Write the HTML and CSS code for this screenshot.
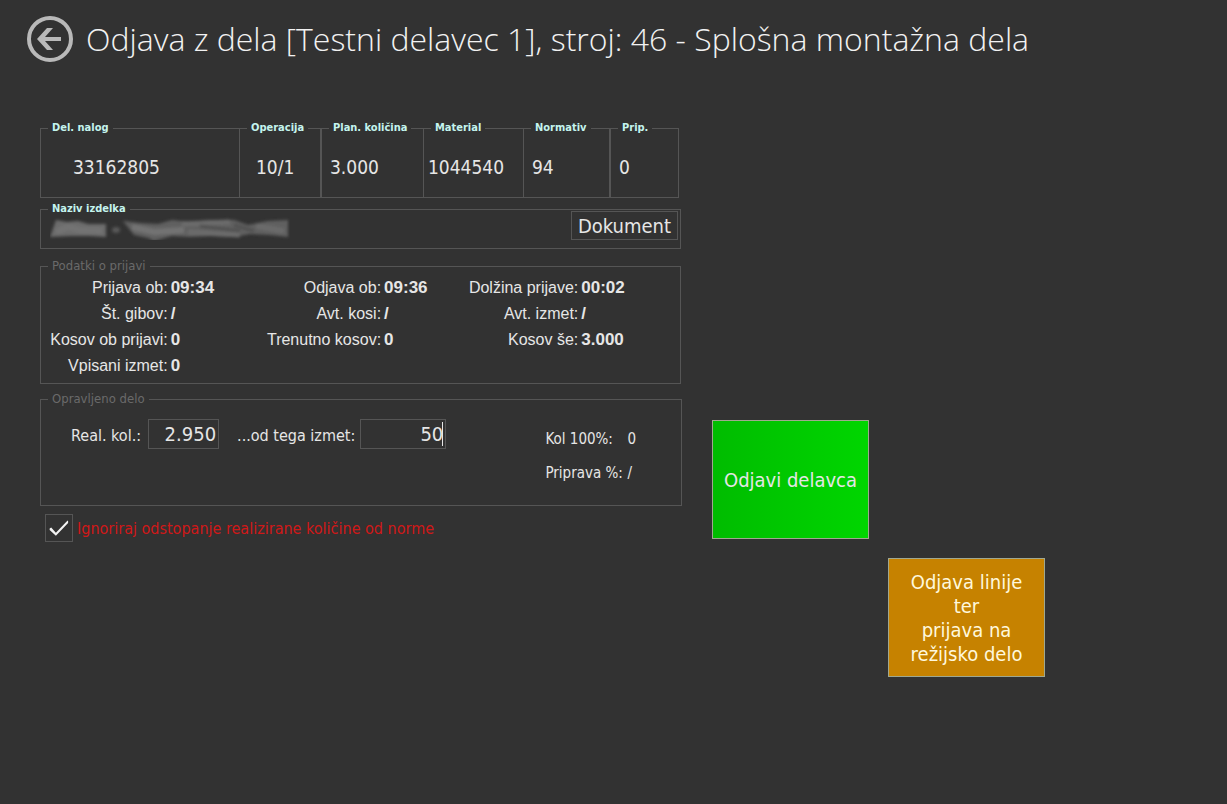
FILE: index.html
```html
<!DOCTYPE html>
<html lang="sl">
<head>
  <meta charset="UTF-8" />
  <meta name="viewport" content="width=device-width, initial-scale=1" />
  <title>Odjava z dela</title>
  <link rel="stylesheet" href="styles.css">
</head>
<body>

<header>
  <button class="back" type="button" aria-label="Nazaj">
    <svg viewBox="0 0 46 46" width="46" height="46">
      <circle cx="23" cy="23" r="21" fill="none" stroke="#b9b9b9" stroke-width="4" />
      <path d="M10 23 L20 12 H26 L18 21 H34 V25 H18 L26 34 H20 Z" fill="#b9b9b9" />
    </svg>
  </button>
  <h1>Odjava z dela [Testni delavec 1], stroj: 46 - Splošna montažna dela</h1>
</header>

<main>
  <form class="work" onsubmit="return false;">

    <div class="order">
      <fieldset class="box first"><legend>Del. nalog</legend><p>33162805</p></fieldset>
      <fieldset class="box operation"><legend>Operacija</legend><p>10/1</p></fieldset>
      <fieldset class="box split"><legend>Plan. količina</legend><p>3.000</p></fieldset>
      <fieldset class="box material"><legend>Material</legend><p>1044540</p></fieldset>
      <fieldset class="box"><legend>Normativ</legend><p>94</p></fieldset>
      <fieldset class="box split"><legend>Prip.</legend><p>0</p></fieldset>
    </div>

    <fieldset class="product">
      <legend>Naziv izdelka</legend>
      <div class="product-row">
        <svg class="smudge" viewBox="0 2 240 24" width="240" height="24" aria-hidden="true">
          <defs>
            <filter id="soft" x="-5%" y="-20%" width="110%" height="140%"><feGaussianBlur stdDeviation="1.6" /></filter>
          </defs>
          <g filter="url(#soft)" transform="translate(0 2)">
            <path d="M0 21 L6 4 L17 6 L28 5 L38 8 L56 8 V21 L40 20 L20 20 Z" fill="#6c6c6c" />
            <ellipse cx="66" cy="14" rx="4" ry="3" fill="#585858" />
            <path d="M73 5 L90 7 L108 8 L122 4 L140 6 L160 4 L184 4 L198 9 L218 5 L238 4 V21 L220 19 L200 18 L184 21 L160 20 L140 21 L122 20 L104 25 L98 22 L84 19 Z" fill="#606060" />
            <path d="M6 16 L18 11 L30 14 L52 15 M82 11 L104 16 L134 14" fill="none" stroke="#737373" stroke-width="6" />
            <path d="M132 8 L180 6 M138 16 L190 19 M206 10 L234 15" fill="none" stroke="#6c6c6c" stroke-width="5" />
            <path d="M150 10 L190 15 M184 9 L204 15" fill="none" stroke="#505050" stroke-width="3" />
          </g>
        </svg>
        <button class="doc" type="button">Dokument</button>
      </div>
    </fieldset>

    <fieldset class="login dim">
      <legend>Podatki o prijavi</legend>
      <dl>
        <dt>Prijava ob:</dt><dd>09:34</dd>
        <dt>Odjava ob:</dt><dd>09:36</dd>
        <dt>Dolžina prijave:</dt><dd>00:02</dd>
        <dt>Št. gibov:</dt><dd>/</dd>
        <dt>Avt. kosi:</dt><dd>/</dd>
        <dt>Avt. izmet:</dt><dd>/</dd>
        <dt>Kosov ob prijavi:</dt><dd>0</dd>
        <dt>Trenutno kosov:</dt><dd>0</dd>
        <dt>Kosov še:</dt><dd>3.000</dd>
        <dt>Vpisani izmet:</dt><dd>0</dd>
      </dl>
    </fieldset>

    <fieldset class="done dim">
      <legend>Opravljeno delo</legend>
      <div class="done-row">
        <label for="realized">Real. kol.:</label>
        <input class="qty" type="text" id="realized" value="2.950">
        <label class="scrap-label" for="scrap">...od tega izmet:</label>
        <span class="caret"><input class="qty wide" type="text" id="scrap" value="50"></span>
        <dl class="percent">
          <dt>Kol 100%:</dt><dd>0</dd>
          <dt>Priprava %:</dt><dd>/</dd>
        </dl>
      </div>
    </fieldset>

    <div class="ignore">
      <input type="checkbox" id="ignore" checked>
      <label for="ignore">Ignoriraj odstopanje realizirane količine od norme</label>
    </div>
  </form>

  <div class="actions">
    <button class="tile green" type="button">Odjavi delavca</button>
    <button class="tile orange" type="button">Odjava linije<br>ter<br>prijava na<br>režijsko delo</button>
  </div>
</main>

</body>
</html>
```
FILE: styles.css
```css
* { box-sizing: border-box; }
body { font-family: "DejaVu Sans Condensed", "DejaVu Sans", sans-serif; margin: 0; background: #323232; color: #e6e6e6; }
button { font-family: inherit; color: inherit; padding: 0; cursor: pointer; }
p, dl, dd { margin: 0; }

header { display: flex; align-items: center; gap: 13px; padding: 16px 27px; }
.back { background: none; border: none; height: 46px; }
.back svg { display: block; }
h1 { margin: 0; font-family: "Open Sans", "Noto Sans", sans-serif; font-size: 32px; font-weight: 300; line-height: 46px; color: #f2f2f2; }

main { display: flex; align-items: flex-start; gap: 30px; padding: 43px 40px; }
.work { flex: 0 1 642px; }

fieldset { margin: 0; padding: 0; min-width: 0; border: 1px solid #555; }
legend { margin-left: 7px; padding: 0 4px; font-size: 11px; font-weight: bold; line-height: 14px; white-space: nowrap; color: #c4f4ee; }
.dim legend { font-size: 13px; font-weight: normal; color: #6a6a6a; }

.order { display: grid; grid-template-columns: 200fr 81fr 103fr 100fr 86fr 69fr; margin-right: 3px; }
.box { border-left: none; }
.box p { padding: 20px 0 18px 8px; font-size: 19px; line-height: 24px; }
.first, .split { border-left: 1px solid #555; }
.first p { padding-left: 32px; }
.operation p { padding-left: 16px; }
.material p { padding-left: 4px; }

.product { margin: 4px 1px 0 0; }
.product-row { display: flex; justify-content: space-between; align-items: flex-end; margin-top: -5px; padding: 0 2px 8px 9px; }
.doc { width: 107px; height: 29px; background: none; border: 1px solid #555; font-size: 20px; line-height: 24px; }

.login { margin: 10px 1px 0 0; padding: 2px 0 4px; }
.login dl { display: grid; grid-template-columns: 127fr 85fr 123fr 82fr 108fr 99fr; column-gap: 3px; font-family: "Liberation Sans", Arial, sans-serif; font-size: 16px; line-height: 26px; }
.login dt { text-align: right; white-space: nowrap; }
.login dd { font-size: 17px; font-weight: bold; }

.done { margin-top: 8px; padding-bottom: 15px; }
.done-row { display: flex; align-items: flex-start; padding: 13px 0 0 30px; font-size: 16px; line-height: 34px; }
.qty { display: block; width: 71px; height: 30px; margin-left: 7px; padding: 0 2px; background: none; border: 1px solid #555; color: #e6e6e6; font-family: inherit; font-size: 20px; text-align: right; }
.wide { width: 86px; margin-left: 5px; }
.scrap-label { margin-left: 18px; }
.caret { position: relative; }
.caret::after { content: ""; position: absolute; right: 3px; top: 3px; width: 1px; height: 24px; background: #e6e6e6; }
.percent { display: grid; grid-template-columns: 79px auto; column-gap: 3px; margin: 3px 45px 0 auto; font-size: 15px; }

.ignore { display: flex; align-items: center; gap: 4px; margin: 8px 0 0 5px; }
.ignore input { appearance: none; width: 28px; height: 28px; margin: 0; border: 1px solid #555; }
.ignore input:checked::before { content: ""; display: block; width: 26px; height: 26px; background: #f2f2f2; clip-path: polygon(14% 52%, 20% 48%, 38% 68%, 82% 22%, 85% 22%, 85% 31%, 38% 80%, 14% 58%); }
.ignore label { padding-top: 2px; font-size: 16px; line-height: 26px; color: #d01818; }

.actions { display: grid; grid-template-columns: 157px 157px; gap: 19px; margin-top: 299px; }
.tile { height: 119px; border: 1px solid #a0a890; font-size: 20px; line-height: 24px; }
.green { background: linear-gradient(to right, #00bc00, #00d600); }
.orange { grid-area: 2 / 2; background: #c68200; color: #fff8dc; }
```
